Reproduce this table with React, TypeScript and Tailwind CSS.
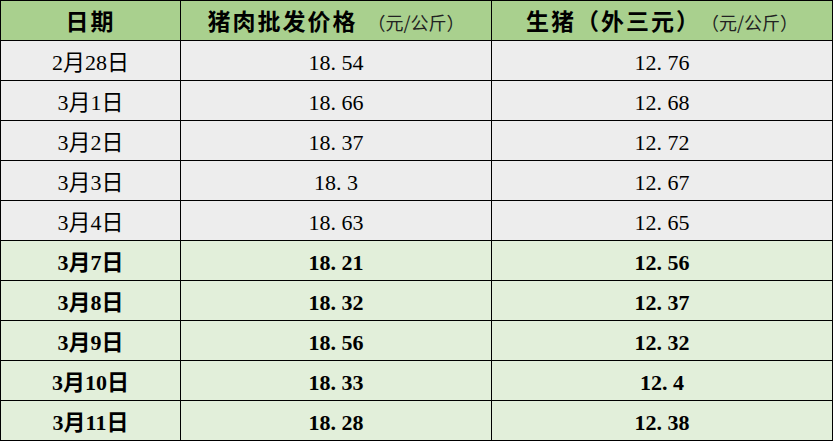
import React from 'react';

const rows = [
  { date: '2月28日', pork: '18.54', pig: '12.76', hl: false },
  { date: '3月1日', pork: '18.66', pig: '12.68', hl: false },
  { date: '3月2日', pork: '18.37', pig: '12.72', hl: false },
  { date: '3月3日', pork: '18.3', pig: '12.67', hl: false },
  { date: '3月4日', pork: '18.63', pig: '12.65', hl: false },
  { date: '3月7日', pork: '18.21', pig: '12.56', hl: true },
  { date: '3月8日', pork: '18.32', pig: '12.37', hl: true },
  { date: '3月9日', pork: '18.56', pig: '12.32', hl: true },
  { date: '3月10日', pork: '18.33', pig: '12.4', hl: true },
  { date: '3月11日', pork: '18.28', pig: '12.38', hl: true },
];

// SimSun-style half-width period
const Num = ({ v }: { v: string }) => {
  const [a, b] = v.split('.');
  return (
    <span>
      {a}
      <span className="inline-block w-[0.5em] text-left">.</span>
      {b}
    </span>
  );
};

export default function App() {
  const body = "font-['Liberation_Serif','Noto_Sans_CJK_SC',serif] text-[22px] text-black";
  const head = "font-['Noto_Sans_CJK_SC',sans-serif] font-bold text-[23px] tracking-[2px] text-black";
  const unit = "font-['Noto_Sans_CJK_SC',sans-serif] font-normal text-[18px] tracking-normal text-[#222] pt-[3px]";

  return (
    <div className="w-[833px] h-[441px] bg-white">
      <div className="grid grid-cols-[179px_310px_340px] auto-rows-[39px] gap-px p-px bg-black w-[833px]">
        <div className={`bg-[#a9d08e] flex items-center justify-center ${head}`}>日期</div>
        <div className={`bg-[#a9d08e] flex items-center justify-center ${head}`}>
          猪肉批发价格<span className={`ml-[10px] ${unit}`}>（元/公斤）</span>
        </div>
        <div className={`bg-[#a9d08e] flex items-center justify-center ${head}`}>
          生猪（外三元）<span className={unit}>（元/公斤）</span>
        </div>

        {rows.map((r) => {
          const bg = r.hl ? 'bg-[#e2efda] font-bold' : 'bg-[#ededed]';
          return (
            <React.Fragment key={r.date}>
              <div className={`${bg} ${body} flex items-center justify-center pt-[3px]`}>{r.date}</div>
              <div className={`${bg} ${body} flex items-center justify-center pt-[3px]`}>
                <Num v={r.pork} />
              </div>
              <div className={`${bg} ${body} flex items-center justify-center pt-[3px]`}>
                <Num v={r.pig} />
              </div>
            </React.Fragment>
          );
        })}
      </div>
    </div>
  );
}
